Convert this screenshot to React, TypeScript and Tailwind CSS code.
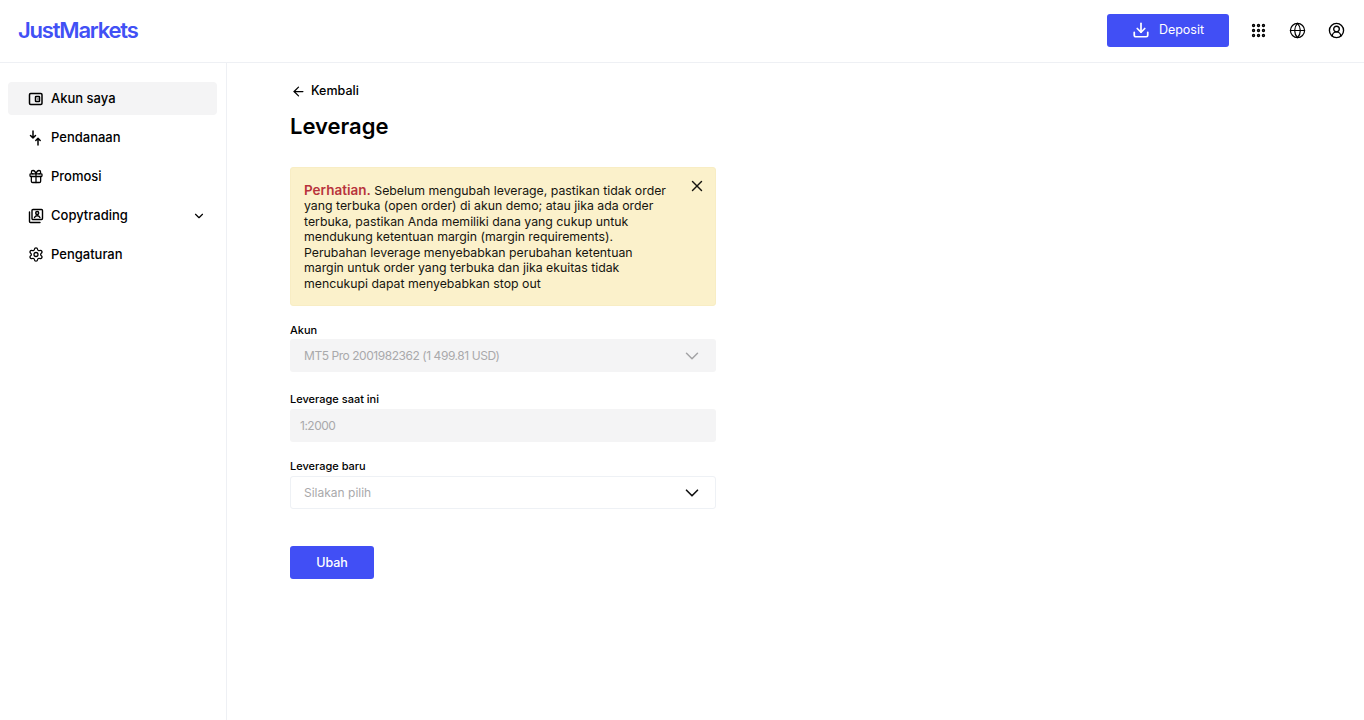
import { ArrowLeft, ChevronDown, Download, Globe, Grip, CircleUserRound, X, Gift, Settings } from "lucide-react";

const font = "font-['Inter','Liberation_Sans',sans-serif]";

function WalletIcon() {
  return (
    <svg width="16" height="16" viewBox="0 0 16 16" fill="none" stroke="currentColor" strokeWidth="1.5" strokeLinejoin="round">
      <rect x="1.5" y="2.5" width="12.5" height="11" rx="1.2" />
      <rect x="7.5" y="5.5" width="4" height="5" rx="0.6" />
      <path d="M9.5 8h.8" />
    </svg>
  );
}

function FundingIcon() {
  return (
    <svg width="16" height="16" viewBox="0 0 16 16" fill="none" stroke="currentColor" strokeWidth="1.5" strokeLinecap="round" strokeLinejoin="round">
      <path d="M5 1v7M2.5 5.5 5 8l2.5-2.5" />
      <path d="M10 15V8.5M7.8 10.5 10 8.3l2.2 2.2" />
    </svg>
  );
}

function CopyIcon() {
  return (
    <svg width="16" height="16" viewBox="0 0 16 16" fill="none" stroke="currentColor" strokeWidth="1.4" strokeLinecap="round" strokeLinejoin="round">
      <rect x="4" y="1.5" width="10.5" height="10" rx="1" />
      <circle cx="9.2" cy="5" r="1.5" />
      <path d="M6.5 9.5c.6-1.3 1.5-1.8 2.7-1.8s2.1.5 2.7 1.8" />
      <path d="M1.5 4v9.5a1 1 0 0 0 1 1H12" />
    </svg>
  );
}

const navItems = [
  { label: "Akun saya", icon: <WalletIcon />, active: true },
  { label: "Pendanaan", icon: <FundingIcon /> },
  { label: "Promosi", icon: <Gift size={17} strokeWidth={1.9} /> },
  { label: "Copytrading", icon: <CopyIcon />, expandable: true },
  { label: "Pengaturan", icon: <Settings size={17} strokeWidth={1.9} /> },
];

const warningLines = [
  "yang terbuka (open order) di akun demo; atau jika ada order",
  "terbuka, pastikan Anda memiliki dana yang cukup untuk",
  "mendukung ketentuan margin (margin requirements).",
  "Perubahan leverage menyebabkan perubahan ketentuan",
  "margin untuk order yang terbuka dan jika ekuitas tidak",
  "mencukupi dapat menyebabkan stop out",
];

function Field({ label, children }: { label: string; children: React.ReactNode }) {
  return (
    <div>
      <div className="mb-[3px] text-[11px] leading-[14px] font-medium text-black">{label}</div>
      {children}
    </div>
  );
}

export default function App() {
  return (
    <div className={`${font} flex h-[720px] w-[1364px] flex-col overflow-hidden bg-white text-black`}>
      <header className="flex h-[63px] shrink-0 items-center justify-between border-b border-[#eef0f4] pr-[19px] pb-[2px] pl-[18px]">
        <div className="text-[22px] leading-none font-semibold tracking-[-1.2px] text-[#4150f5]">JustMarkets</div>
        <div className="flex items-center">
          <button className="flex h-[33px] w-[122px] items-center justify-center gap-[9px] rounded-[3px] bg-[#414ff5] text-[12.5px] text-white">
            <Download size={18} strokeWidth={2.3} />
            Deposit
          </button>
          <div className="ml-[21px] flex items-center gap-[22px]">
            <span className="flex h-[17px] w-[17px] items-center justify-center"><Grip size={19} strokeWidth={2.8} /></span>
            <Globe size={17} strokeWidth={1.7} />
            <CircleUserRound size={17} strokeWidth={1.9} />
          </div>
        </div>
      </header>

      <div className="flex flex-1">
        <aside className="w-[227px] shrink-0 border-r border-[#eef0f4] pt-[19px] pr-[9px] pl-[8px]">
          <nav className="flex flex-col gap-[6px]">
            {navItems.map((item) => (
              <div
                key={item.label}
                className={`flex h-[33px] items-center gap-[7px] rounded-[4px] pr-[11px] pl-[20px] text-[13px] font-medium ${item.active ? "bg-[#f4f4f5]" : ""}`}
              >
                <span className="flex h-4 w-4 items-center justify-center">{item.icon}</span>
                <span className="flex-1">{item.label}</span>
                {item.expandable && <ChevronDown size={14} strokeWidth={2} />}
              </div>
            ))}
          </nav>
        </aside>

        <main className="flex-1 pt-[20px] pl-[63px]">
          <div className="w-[426px]">
            <div className="flex h-[16px] items-center gap-[5px] text-[12.5px] font-medium">
              <ArrowLeft size={15} strokeWidth={2} className="ml-px" />
              Kembali
            </div>
            <h1 className="mt-[12px] text-[22px] leading-[30px] font-semibold">Leverage</h1>

            <div className="relative mt-[26px] h-[139px] rounded-[3px] border border-[#f8edc4] bg-[#fbf1cb] pt-[14.5px] pl-[13px] text-[12.3px] leading-[15.6px] text-[#16150f]">
              <div className="whitespace-nowrap">
                <span className="text-[13.5px] font-semibold text-[#b8343c]">Perhatian.</span> Sebelum mengubah leverage, pastikan tidak order
              </div>
              {warningLines.map((line) => (
                <div key={line} className="whitespace-nowrap">{line}</div>
              ))}
              <X size={18} strokeWidth={1.9} className="absolute top-[9px] right-[9px]" />
            </div>

            <div className="mt-[17px] flex flex-col gap-[20px]">
              <Field label="Akun">
                <div className="-mt-px flex h-[33px] items-center justify-between rounded-[3px] bg-[#f4f4f5] pr-[13px] pl-[14px] text-[12px] tracking-[-0.45px] text-[#a9a9ab]">
                  MT5 Pro 2001982362 (1 499.81 USD)
                  <ChevronDown size={22} strokeWidth={1.6} className="text-[#a3a3a5]" />
                </div>
              </Field>
              <Field label="Leverage saat ini">
                <div className="flex h-[33px] items-center rounded-[3px] bg-[#f4f4f5] pl-[10px] text-[12px] tracking-[-0.5px] text-[#a9a9ab]">1:2000</div>
              </Field>
              <div className="-mt-[3px]">
                <Field label="Leverage baru">
                  <div className="flex h-[33px] items-center justify-between rounded-[3px] border border-[#eef1f5] pr-[12.5px] pl-[13px] text-[12px] text-[#a9a9ab]">
                    Silakan pilih
                    <ChevronDown size={22} strokeWidth={1.8} className="text-[#111]" />
                  </div>
                </Field>
              </div>
            </div>

            <button className="mt-[37px] h-[33px] w-[84px] rounded-[3px] bg-[#414ff5] pt-px text-[12.5px] font-medium text-white">Ubah</button>
          </div>
        </main>
      </div>
    </div>
  );
}
